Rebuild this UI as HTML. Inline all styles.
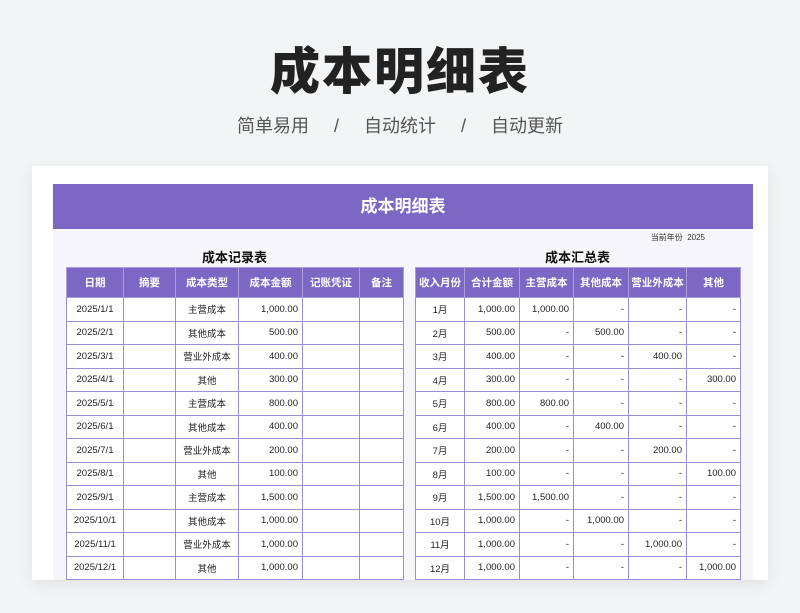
<!DOCTYPE html>
<html><head><meta charset="utf-8"><style>
*{margin:0;padding:0;box-sizing:border-box}
body{width:800px;height:613px;background:#f3f4f6;font-family:"Liberation Sans","Noto Sans CJK SC",sans-serif;position:relative;overflow:hidden}
.t{position:absolute;left:0;width:800px;text-align:center;top:32px;font-size:50px;font-weight:900;color:#222;letter-spacing:2px}
.s{position:absolute;left:0;width:800px;text-align:center;top:112px;font-size:18px;color:#555;word-spacing:0}
.card{position:absolute;left:32px;top:166px;width:736px;height:414px;background:#fff;box-shadow:0 4px 14px rgba(0,0,0,.08);overflow:hidden}
.in{position:absolute;left:21px;top:18px;width:700px;height:420px;background:#f7f6fb}
.hd{height:45px;background:#7b68c4;color:#fff;font-weight:bold;font-size:17px;text-align:center;line-height:45px}
.yr{position:absolute;right:48px;top:48px;font-size:8px;color:#333}
.cap{position:absolute;top:63px;font-size:13px;font-weight:bold;color:#111;text-align:center}
table{position:absolute;top:83px;border-collapse:collapse;table-layout:fixed;font-size:9.5px;color:#222;background:#fff}
th{background:#7b68c4;color:#fff;height:30px;font-size:10.5px;font-weight:bold;border:1px solid #a99bdc}
td{height:23.5px;border:1px solid #9b8ed0;text-align:center}
td.r{text-align:right;padding-right:4px}
</style></head><body>
<div class="t">成本明细表</div>
<div class="s">简单易用 &nbsp; &nbsp; / &nbsp; &nbsp; 自动统计 &nbsp; &nbsp; / &nbsp; &nbsp; 自动更新</div>
<div class="card"><div class="in">
<div class="hd">成本明细表</div>
<div class="yr">当前年份 &nbsp;2025</div>
<div class="cap" style="left:13px;width:337px">成本记录表</div>
<div class="cap" style="left:362px;width:325px">成本汇总表</div>
<table style="left:13px;width:337px">
<colgroup><col style="width:57px"><col style="width:52px"><col style="width:63px"><col style="width:64px"><col style="width:57px"><col style="width:44px"></colgroup>
<tr><th>日期</th><th>摘要</th><th>成本类型</th><th>成本金额</th><th>记账凭证</th><th>备注</th></tr>
<tr><td>2025/1/1</td><td></td><td>主营成本</td><td class="r">1,000.00</td><td></td><td></td></tr>
<tr><td>2025/2/1</td><td></td><td>其他成本</td><td class="r">500.00</td><td></td><td></td></tr>
<tr><td>2025/3/1</td><td></td><td>营业外成本</td><td class="r">400.00</td><td></td><td></td></tr>
<tr><td>2025/4/1</td><td></td><td>其他</td><td class="r">300.00</td><td></td><td></td></tr>
<tr><td>2025/5/1</td><td></td><td>主营成本</td><td class="r">800.00</td><td></td><td></td></tr>
<tr><td>2025/6/1</td><td></td><td>其他成本</td><td class="r">400.00</td><td></td><td></td></tr>
<tr><td>2025/7/1</td><td></td><td>营业外成本</td><td class="r">200.00</td><td></td><td></td></tr>
<tr><td>2025/8/1</td><td></td><td>其他</td><td class="r">100.00</td><td></td><td></td></tr>
<tr><td>2025/9/1</td><td></td><td>主营成本</td><td class="r">1,500.00</td><td></td><td></td></tr>
<tr><td>2025/10/1</td><td></td><td>其他成本</td><td class="r">1,000.00</td><td></td><td></td></tr>
<tr><td>2025/11/1</td><td></td><td>营业外成本</td><td class="r">1,000.00</td><td></td><td></td></tr>
<tr><td>2025/12/1</td><td></td><td>其他</td><td class="r">1,000.00</td><td></td><td></td></tr>
<tr><td></td><td></td><td></td><td></td><td></td><td></td></tr>
</table>
<table style="left:362px;width:325px">
<colgroup><col style="width:49px"><col style="width:55px"><col style="width:54px"><col style="width:55px"><col style="width:58px"><col style="width:54px"></colgroup>
<tr><th>收入月份</th><th>合计金额</th><th>主营成本</th><th>其他成本</th><th>营业外成本</th><th>其他</th></tr>
<tr><td>1月</td><td class="r">1,000.00</td><td class="r">1,000.00</td><td class="r">-</td><td class="r">-</td><td class="r">-</td></tr>
<tr><td>2月</td><td class="r">500.00</td><td class="r">-</td><td class="r">500.00</td><td class="r">-</td><td class="r">-</td></tr>
<tr><td>3月</td><td class="r">400.00</td><td class="r">-</td><td class="r">-</td><td class="r">400.00</td><td class="r">-</td></tr>
<tr><td>4月</td><td class="r">300.00</td><td class="r">-</td><td class="r">-</td><td class="r">-</td><td class="r">300.00</td></tr>
<tr><td>5月</td><td class="r">800.00</td><td class="r">800.00</td><td class="r">-</td><td class="r">-</td><td class="r">-</td></tr>
<tr><td>6月</td><td class="r">400.00</td><td class="r">-</td><td class="r">400.00</td><td class="r">-</td><td class="r">-</td></tr>
<tr><td>7月</td><td class="r">200.00</td><td class="r">-</td><td class="r">-</td><td class="r">200.00</td><td class="r">-</td></tr>
<tr><td>8月</td><td class="r">100.00</td><td class="r">-</td><td class="r">-</td><td class="r">-</td><td class="r">100.00</td></tr>
<tr><td>9月</td><td class="r">1,500.00</td><td class="r">1,500.00</td><td class="r">-</td><td class="r">-</td><td class="r">-</td></tr>
<tr><td>10月</td><td class="r">1,000.00</td><td class="r">-</td><td class="r">1,000.00</td><td class="r">-</td><td class="r">-</td></tr>
<tr><td>11月</td><td class="r">1,000.00</td><td class="r">-</td><td class="r">-</td><td class="r">1,000.00</td><td class="r">-</td></tr>
<tr><td>12月</td><td class="r">1,000.00</td><td class="r">-</td><td class="r">-</td><td class="r">-</td><td class="r">1,000.00</td></tr>
<tr><td></td><td></td><td></td><td></td><td></td><td></td></tr>
</table>
</div></div>
</body></html>
